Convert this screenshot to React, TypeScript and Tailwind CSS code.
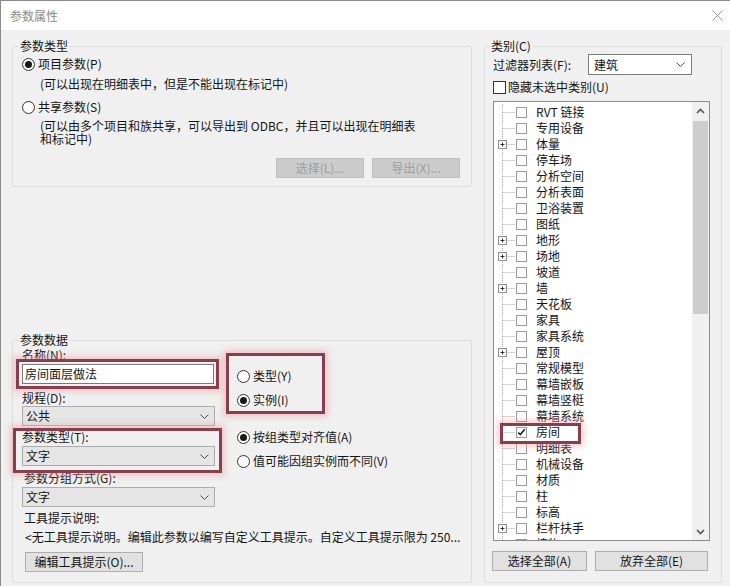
import React from "react";

const FONT = `"Noto Sans CJK SC", "Noto Sans", sans-serif`;

function Radio({ checked }: { checked?: boolean }) {
  return (
    <span className="w-[13px] h-[13px] rounded-full border border-[#333333] bg-white flex items-center justify-center shrink-0">
      {checked && <span className="w-[7px] h-[7px] rounded-full bg-[#1a1a1a]" />}
    </span>
  );
}

function RadioRow({ checked, label }: { checked?: boolean; label: string }) {
  return (
    <div className="flex items-center h-[16px] gap-[3px]">
      <Radio checked={checked} />
      <span className="leading-[16px]">{label}</span>
    </div>
  );
}

function Chevron() {
  return (
    <svg width="9" height="5" viewBox="0 0 9 5" className="shrink-0">
      <polyline points="0.5,0.5 4.5,4.5 8.5,0.5" fill="none" stroke="#4a4a4a" strokeWidth="1" />
    </svg>
  );
}

function Select({ value }: { value: string }) {
  return (
    <div className="h-[20px] w-[193px] bg-[#e5e5e5] border border-[#adadad] flex items-center justify-between pl-[3px] pr-[5px]">
      <span className="leading-[16px]">{value}</span>
      <Chevron />
    </div>
  );
}

function Label({ children, className = "" }: { children: React.ReactNode; className?: string }) {
  return <div className={`h-[14px] leading-[14px] ${className}`}>{children}</div>;
}

const items: [string, boolean, boolean][] = [
  ["RVT 链接", false, false],
  ["专用设备", false, false],
  ["体量", true, false],
  ["停车场", false, false],
  ["分析空间", false, false],
  ["分析表面", false, false],
  ["卫浴装置", false, false],
  ["图纸", false, false],
  ["地形", true, false],
  ["场地", true, false],
  ["坡道", false, false],
  ["墙", true, false],
  ["天花板", false, false],
  ["家具", false, false],
  ["家具系统", false, false],
  ["屋顶", true, false],
  ["常规模型", false, false],
  ["幕墙嵌板", false, false],
  ["幕墙竖梃", false, false],
  ["幕墙系统", false, false],
  ["房间", false, true],
  ["明细表", false, false],
  ["机械设备", false, false],
  ["材质", false, false],
  ["柱", false, false],
  ["标高", false, false],
  ["栏杆扶手", true, false],
  ["植物", false, false],
];

function TreeRow({ label, plus, checked }: { label: string; plus: boolean; checked: boolean }) {
  return (
    <div className="flex items-center h-[16px] shrink-0">
      <svg width="22" height="16" viewBox="0 0 22 16" className="shrink-0">
        <line x1="8.5" y1="0" x2="8.5" y2="16" stroke="#a8a8a8" strokeDasharray="1 1" />
        <line x1={plus ? 12.5 : 8.5} y1="8.5" x2="21" y2="8.5" stroke="#a8a8a8" strokeDasharray="1 1" />
        {plus && (
          <>
            <rect x="4.5" y="4.5" width="8" height="8" fill="white" stroke="#8f8f8f" />
            <line x1="6.5" y1="8.5" x2="10.5" y2="8.5" stroke="#333" />
            <line x1="8.5" y1="6.5" x2="8.5" y2="10.5" stroke="#333" />
          </>
        )}
      </svg>
      <span className="w-[11px] h-[11px] border border-[#9a9a9a] bg-white shrink-0 flex items-center justify-center">
        {checked && (
          <svg width="11" height="11" viewBox="0 0 11 11">
            <polyline points="1.5,5.5 4,8 9.5,1.5" fill="none" stroke="#1a1a1a" strokeWidth="1.8" />
          </svg>
        )}
      </span>
      <span className="ml-[9px] leading-[16px] whitespace-nowrap">{label}</span>
    </div>
  );
}

const redBox =
  "absolute border-[3px] border-[#8a3d4d] shadow-[0_0_6px_3px_rgba(240,150,160,0.45)] pointer-events-none";

export default function App() {
  return (
    <div
      className="relative w-[730px] h-[586px] overflow-hidden bg-[#f0f0f0] text-[12px] text-[#141414]"
      style={{ fontFamily: FONT }}
    >
      {/* title bar */}
      <div className="h-[30px] bg-white border-t border-l border-[#8a8a8a] flex items-center justify-between pl-[9px] pr-[7px]">
        <span className="text-[#8a8a8a] text-[12px] leading-[14px]">参数属性</span>
        <svg width="11" height="11" viewBox="0 0 11 11">
          <line x1="0.5" y1="0.5" x2="10.5" y2="10.5" stroke="#9a9a9a" strokeWidth="1" />
          <line x1="10.5" y1="0.5" x2="0.5" y2="10.5" stroke="#9a9a9a" strokeWidth="1" />
        </svg>
      </div>

      {/* body */}
      <div className="h-[556px] border-l border-[#8a8a8a] flex pl-[11px] pt-[9px]">
        {/* left column */}
        <div className="w-[460px] flex flex-col shrink-0">
          <fieldset className="border border-[#dcdcdc] rounded-[2px] px-[9px] pt-[3px] pb-[8px]">
            <legend className="-ml-[3px] px-[1px] leading-[14px]">参数类型</legend>
            <RadioRow checked label="项目参数(P)" />
            <div className="mt-[4px] ml-[18px] h-[16px] leading-[16px]">(可以出现在明细表中，但是不能出现在标记中)</div>
            <div className="mt-[7px]">
              <RadioRow label="共享参数(S)" />
            </div>
            <div className="mt-[4px] ml-[18px] leading-[13px]">
              (可以由多个项目和族共享，可以导出到 ODBC，并且可以出现在明细表
              <br />
              和标记中)
            </div>
            <div className="mt-[13px] flex justify-end gap-[8px] pr-[2px]">
              <div className="w-[88px] h-[20px] bg-[#cccccc] border border-[#bfbfbf] text-[#9c9c9c] flex items-center justify-center leading-[16px]">
                选择(L)...
              </div>
              <div className="w-[88px] h-[20px] bg-[#cccccc] border border-[#bfbfbf] text-[#9c9c9c] flex items-center justify-center leading-[16px]">
                导出(X)...
              </div>
            </div>
          </fieldset>

          <fieldset className="mt-[146px] border border-[#dcdcdc] rounded-[2px] px-[9px] pt-[1px] pb-[10px]">
            <legend className="-ml-[3px] px-[1px] leading-[14px]">参数数据</legend>
            <div className="flex">
              <div className="w-[193px] flex flex-col shrink-0">
                <Label>名称(N):</Label>
                <div className="mt-[2px] h-[20px] w-[192px] bg-white border border-[#7a7a7a] flex items-center pl-[2px]">
                  <span className="leading-[16px]">房间面层做法</span>
                </div>
                <Label className="mt-[7px]">规程(D):</Label>
                <div className="mt-[1px]">
                  <Select value="公共" />
                </div>
                <Label className="mt-[4px]">参数类型(T):</Label>
                <div className="mt-[2px]">
                  <Select value="文字" />
                </div>
                <Label className="mt-[5px] pl-[2px]">参数分组方式(G):</Label>
                <div className="mt-[2px]">
                  <Select value="文字" />
                </div>
              </div>
              <div className="ml-[22px] flex flex-col">
                <div className="mt-[20px]">
                  <RadioRow label="类型(Y)" />
                </div>
                <div className="mt-[8px]">
                  <RadioRow checked label="实例(I)" />
                </div>
                <div className="mt-[21px]">
                  <RadioRow checked label="按组类型对齐值(A)" />
                </div>
                <div className="mt-[8px]">
                  <RadioRow label="值可能因组实例而不同(V)" />
                </div>
              </div>
            </div>
            <Label className="mt-[4px] pl-[2px]">工具提示说明:</Label>
            <Label className="mt-[5px] pl-[3px] whitespace-nowrap">
              &lt;无工具提示说明。编辑此参数以编写自定义工具提示。自定义工具提示限为 250...
            </Label>
            <div className="mt-[8px] ml-[3px] w-[118px] h-[20px] bg-[#e1e1e1] border border-[#adadad] flex items-center justify-center leading-[16px]">
              编辑工具提示(O)...
            </div>
          </fieldset>
        </div>

        {/* right column */}
        <fieldset className="ml-[12px] w-[238px] shrink-0 self-start border border-[#dcdcdc] rounded-[2px] pl-[8px] pr-[10px] pt-[1px] pb-[11px]">
          <legend className="-ml-[3px] px-[1px] leading-[14px]">类别(C)</legend>
          <div className="flex items-center h-[21px]">
            <span className="leading-[16px] w-[95px] shrink-0">过滤器列表(F):</span>
            <div className="w-[104px] h-[21px] bg-white border border-[#7a7a7a] flex items-center justify-between pl-[5px] pr-[6px]">
              <span className="leading-[16px]">建筑</span>
              <Chevron />
            </div>
          </div>
          <div className="mt-[4px] flex items-center h-[16px] gap-[2px]">
            <span className="w-[13px] h-[13px] border border-[#333333] bg-white shrink-0" />
            <span className="leading-[16px]">隐藏未选中类别(U)</span>
          </div>
          <div className="mt-[6px] w-[217px] h-[440px] border border-[#8c8c8c] bg-white flex">
            <div className="flex-1 flex flex-col overflow-hidden pt-[2px]">
              {items.map(([label, plus, checked]) => (
                <TreeRow key={label} label={label} plus={plus} checked={checked} />
              ))}
            </div>
            <div className="w-[17px] h-full bg-[#f0f0f0] flex flex-col shrink-0">
              <div className="h-[17px] flex items-center justify-center">
                <svg width="9" height="6" viewBox="0 0 9 6">
                  <polyline points="1,5 4.5,1.5 8,5" fill="none" stroke="#555" strokeWidth="1.6" />
                </svg>
              </div>
              <div className="mt-[2px] mx-[1px] h-[193px] bg-[#cdcdcd]" />
              <div className="flex-1" />
              <div className="h-[17px] flex items-center justify-center">
                <svg width="9" height="6" viewBox="0 0 9 6">
                  <polyline points="1,1 4.5,4.5 8,1" fill="none" stroke="#555" strokeWidth="1.6" />
                </svg>
              </div>
            </div>
          </div>
          <div className="mt-[10px] flex gap-[8px] -ml-[1px]">
            <div className="w-[95px] h-[20px] bg-[#e1e1e1] border border-[#adadad] flex items-center justify-center leading-[16px]">
              选择全部(A)
            </div>
            <div className="w-[113px] h-[20px] bg-[#e1e1e1] border border-[#adadad] flex items-center justify-center leading-[16px]">
              放弃全部(E)
            </div>
          </div>
        </fieldset>
      </div>

      {/* highlight overlays */}
      <div className={`${redBox} left-[16px] top-[359px] w-[203px] h-[30px]`} />
      <div className={`${redBox} left-[226px] top-[353px] w-[99px] h-[61px]`} />
      <div className={`${redBox} left-[13px] top-[428px] w-[209px] h-[45px]`} />
      <div className={`${redBox} left-[500px] top-[423px] w-[81px] h-[21px]`} />
    </div>
  );
}
